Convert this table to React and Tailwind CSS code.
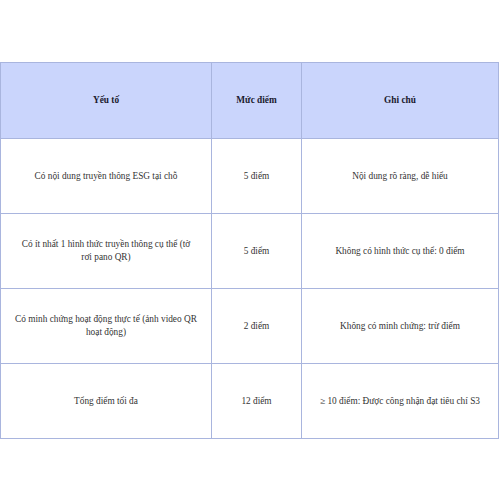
import React from "react";

const rows = [
  [<>Có nội dung truyền thông ESG tại chỗ</>, "5 điểm", "Nội dung rõ ràng, dễ hiểu"],
  [<>Có ít nhất 1 hình thức truyền thông cụ thể (tờ<br />rơi pano QR)</>, "5 điểm", "Không có hình thức cụ thể: 0 điểm"],
  [<>Có minh chứng hoạt động thực tế (ảnh video QR<br />hoạt động)</>, "2 điểm", "Không có minh chứng: trừ điểm"],
  [<>Tổng điểm tối đa</>, "12 điểm", "≥ 10 điểm: Được công nhận đạt tiêu chí S3"],
];

const cell = "flex items-center justify-center text-center px-2 leading-[13px] border-[#a9b5de]";

export default function App() {
  return (
    <div className="w-[500px] h-[500px] bg-white pt-[62px] font-['Liberation_Serif',serif] text-[9.3px] text-[#333]">
      <div className="grid grid-cols-[211px_90px_1fr] border border-[#a9b5de] w-[499px]">
        <div className={`${cell} h-[75px] bg-[#cad5fc] border-r font-bold text-[#1a1a2e]`}>Yếu tố</div>
        <div className={`${cell} h-[75px] bg-[#cad5fc] border-r font-bold text-[#1a1a2e]`}>Mức điểm</div>
        <div className={`${cell} h-[75px] bg-[#cad5fc] font-bold text-[#1a1a2e]`}>Ghi chú</div>
        {rows.map((r, i) => (
          <React.Fragment key={i}>
            <div className={`${cell} h-[75px] border-t border-r`}><p>{r[0]}</p></div>
            <div className={`${cell} h-[75px] border-t border-r`}>{r[1]}</div>
            <div className={`${cell} h-[75px] border-t`}>{r[2]}</div>
          </React.Fragment>
        ))}
      </div>
    </div>
  );
}
